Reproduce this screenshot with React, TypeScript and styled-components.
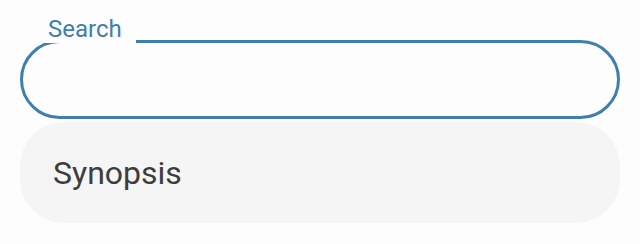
import { useState } from 'react';
import styled, { createGlobalStyle } from 'styled-components';

const GlobalStyle = createGlobalStyle`
  html, body {
    margin: 0;
    padding: 0;
    background: #fdfdfd;
    font-family: Roboto, "Noto Sans", sans-serif;
  }
`;

const Page = styled.div`
  padding: 40px 20px 0;
  display: flex;
  flex-direction: column;
  gap: 3px;
`;

const Field = styled.div`
  position: relative;
`;

const Label = styled.label`
  position: absolute;
  left: 28px;
  top: -23px;
  font-size: 24px;
  line-height: 1;
  color: #3e7fad;
  pointer-events: none;
`;

const Outline = styled.fieldset`
  margin: 0;
  padding: 0 0 0 17px;
  border: 3px solid #3e7fad;
  border-radius: 40px;
  display: flex;
  flex-direction: column;
`;

const Notch = styled.legend`
  width: 96px;
  height: 0;
  padding: 0;
  font-size: 0;
  line-height: 0;
`;

const Input = styled.input`
  height: 73px;
  border: none;
  outline: none;
  background: transparent;
  font-family: inherit;
  font-size: 22px;
  color: #333;
  padding: 0 14px;
`;

const Panel = styled.div`
  height: 101px;
  border-radius: 44px;
  background: #f5f5f5;
  display: flex;
  align-items: center;
  padding-left: 33px;
  font-size: 32px;
  color: #3d3d3d;
`;

export default function App() {
  const [query, setQuery] = useState('');
  return (
    <>
      <GlobalStyle />
      <Page>
        <Field>
          <Label htmlFor="search">Search</Label>
          <Outline>
            <Notch />
            <Input id="search" value={query} onChange={(e) => setQuery(e.target.value)} />
          </Outline>
        </Field>
        <Panel>Synopsis</Panel>
      </Page>
    </>
  );
}
